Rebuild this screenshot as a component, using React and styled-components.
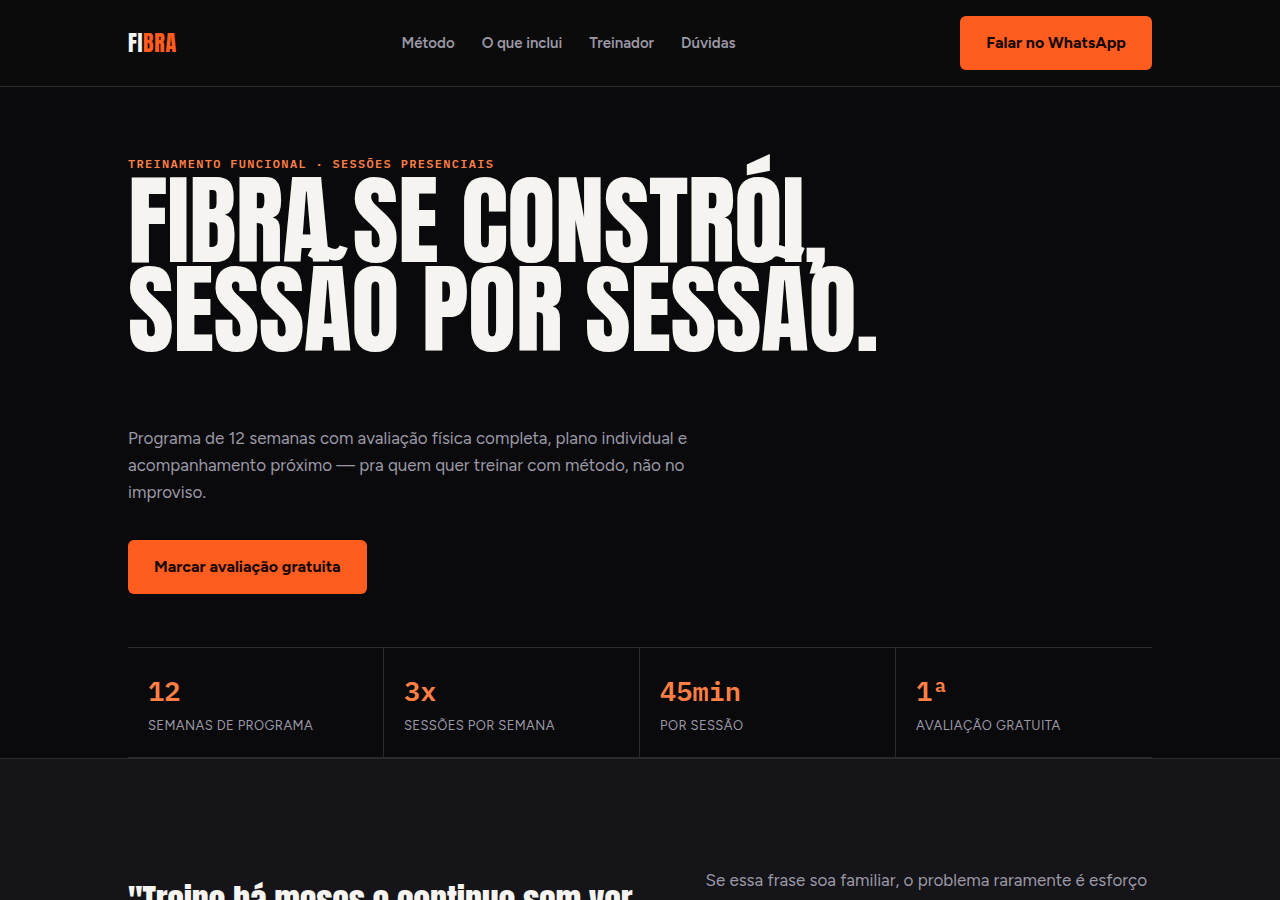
import React from "react";
import styled, { createGlobalStyle, ThemeProvider } from "styled-components";

const theme = {
  bg: "#0a0a0c",
  bar: "#0b0b0b",
  panel: "#151418",
  line: "#2a2a31",
  text: "#f5f4f0",
  muted: "#9b99a6",
  accent: "#ff5c1f",
  accentSoft: "#ff7f45",
  display: '"Anton", "Oswald", sans-serif',
  body: '"Figtree", "Lato", sans-serif',
  mono: '"IBM Plex Mono", "Liberation Mono", monospace',
};

const GlobalStyle = createGlobalStyle`
  *, *::before, *::after { box-sizing: border-box; }
  body {
    margin: 0;
    background: ${theme.bg};
    color: ${theme.text};
    font-family: ${theme.body};
    font-size: 17px;
    line-height: 27px;
  }
  h1, h2, p, dl, dd { margin: 0; }
`;

const Container = styled.div`
  width: 80%;
  max-width: 1120px;
  margin: 0 auto;
`;

const Header = styled.header`
  background: ${(p) => p.theme.bar};
  border-bottom: 1px solid ${(p) => p.theme.line};
`;

const HeaderRow = styled(Container)`
  display: flex;
  align-items: center;
  justify-content: space-between;
  padding: 16px 0;
`;

const Logo = styled.a`
  font-family: ${(p) => p.theme.display};
  font-size: 22px;
  line-height: 24px;
  letter-spacing: 0.03em;
  color: ${(p) => p.theme.text};
  text-decoration: none;
`;

const LogoAccent = styled.span`
  color: ${(p) => p.theme.accent};
`;

const Nav = styled.nav`
  display: flex;
  gap: 27px;
`;

const NavLink = styled.a`
  font-size: 15px;
  font-weight: 600;
  color: ${(p) => p.theme.muted};
  text-decoration: none;
`;

const Button = styled.button`
  padding: 14px 26px;
  border: 0;
  border-radius: 6px;
  background: ${(p) => p.theme.accent};
  color: #140600;
  font-family: inherit;
  font-size: 16px;
  font-weight: 700;
  line-height: 26px;
  cursor: pointer;
`;

const Hero = styled(Container)`
  padding-top: 65px;
`;

const Eyebrow = styled.p`
  font-family: ${(p) => p.theme.mono};
  font-size: 12px;
  font-weight: 600;
  line-height: 24px;
  letter-spacing: 0.11em;
  text-transform: uppercase;
  color: ${(p) => p.theme.accentSoft};
`;

const Title = styled.h1`
  font-family: ${(p) => p.theme.display};
  font-size: 99px;
  font-weight: 400;
  line-height: 89px;
  letter-spacing: -0.005em;
  text-transform: uppercase;
`;

const Lead = styled.p`
  max-width: 576px;
  margin: 71px 0 34px;
  color: ${(p) => p.theme.muted};
`;

const Stats = styled.dl`
  display: grid;
  grid-template-columns: repeat(4, 1fr);
  margin-top: 53px;
  border-top: 1px solid ${(p) => p.theme.line};
  border-bottom: 1px solid ${(p) => p.theme.line};
`;

const Stat = styled.div`
  display: flex;
  flex-direction: column-reverse;
  gap: 2px;
  padding: 21px 20px;
  border-right: 1px solid ${(p) => p.theme.line};

  &:last-child { border-right: 0; }
`;

const StatValue = styled.dd`
  font-family: ${(p) => p.theme.mono};
  font-size: 27px;
  font-weight: 600;
  line-height: 44px;
  color: ${(p) => p.theme.accentSoft};
`;

const StatLabel = styled.dt`
  font-size: 13px;
  line-height: 21px;
  letter-spacing: 0.03em;
  text-transform: uppercase;
  color: ${(p) => p.theme.muted};
`;

const Problem = styled.section`
  background: ${(p) => p.theme.panel};
  border-top: 1px solid ${(p) => p.theme.line};
  padding: 108px 0;
`;

const ProblemGrid = styled(Container)`
  display: grid;
  grid-template-columns: 1.15fr 1fr;
  gap: 64px;
`;

const Quote = styled.h2`
  font-family: ${(p) => p.theme.display};
  font-size: 34px;
  font-weight: 400;
  line-height: 40px;
  letter-spacing: -0.005em;
  padding-top: 14px;
`;

const Answer = styled.p`
  color: ${(p) => p.theme.muted};
`;

const links = [
  ["#metodo", "Método"],
  ["#inclui", "O que inclui"],
  ["#treinador", "Treinador"],
  ["#duvidas", "Dúvidas"],
];

const stats = [
  ["12", "Semanas de programa"],
  ["3x", "Sessões por semana"],
  ["45min", "Por sessão"],
  ["1ª", "Avaliação gratuita"],
];

export default function App() {
  return (
    <ThemeProvider theme={theme}>
      <GlobalStyle />
      <Header>
        <HeaderRow>
          <Logo href="#">FI<LogoAccent>BRA</LogoAccent></Logo>
          <Nav>
            {links.map(([href, label]) => (
              <NavLink key={href} href={href}>{label}</NavLink>
            ))}
          </Nav>
          <Button type="button">Falar no WhatsApp</Button>
        </HeaderRow>
      </Header>
      <main>
        <Hero>
          <Eyebrow>Treinamento funcional · Sessões presenciais</Eyebrow>
          <Title>Fibra se constrói,<br />sessão por sessão.</Title>
          <Lead>
            Programa de 12 semanas com avaliação física completa, plano individual e
            acompanhamento próximo — pra quem quer treinar com método, não no improviso.
          </Lead>
          <Button type="button">Marcar avaliação gratuita</Button>
          <Stats>
            {stats.map(([value, label]) => (
              <Stat key={label}>
                <StatLabel>{label}</StatLabel>
                <StatValue>{value}</StatValue>
              </Stat>
            ))}
          </Stats>
        </Hero>
        <Problem>
          <ProblemGrid>
            <Quote>"Treino há meses e continuo sem ver</Quote>
            <Answer>Se essa frase soa familiar, o problema raramente é esforço</Answer>
          </ProblemGrid>
        </Problem>
      </main>
    </ThemeProvider>
  );
}
